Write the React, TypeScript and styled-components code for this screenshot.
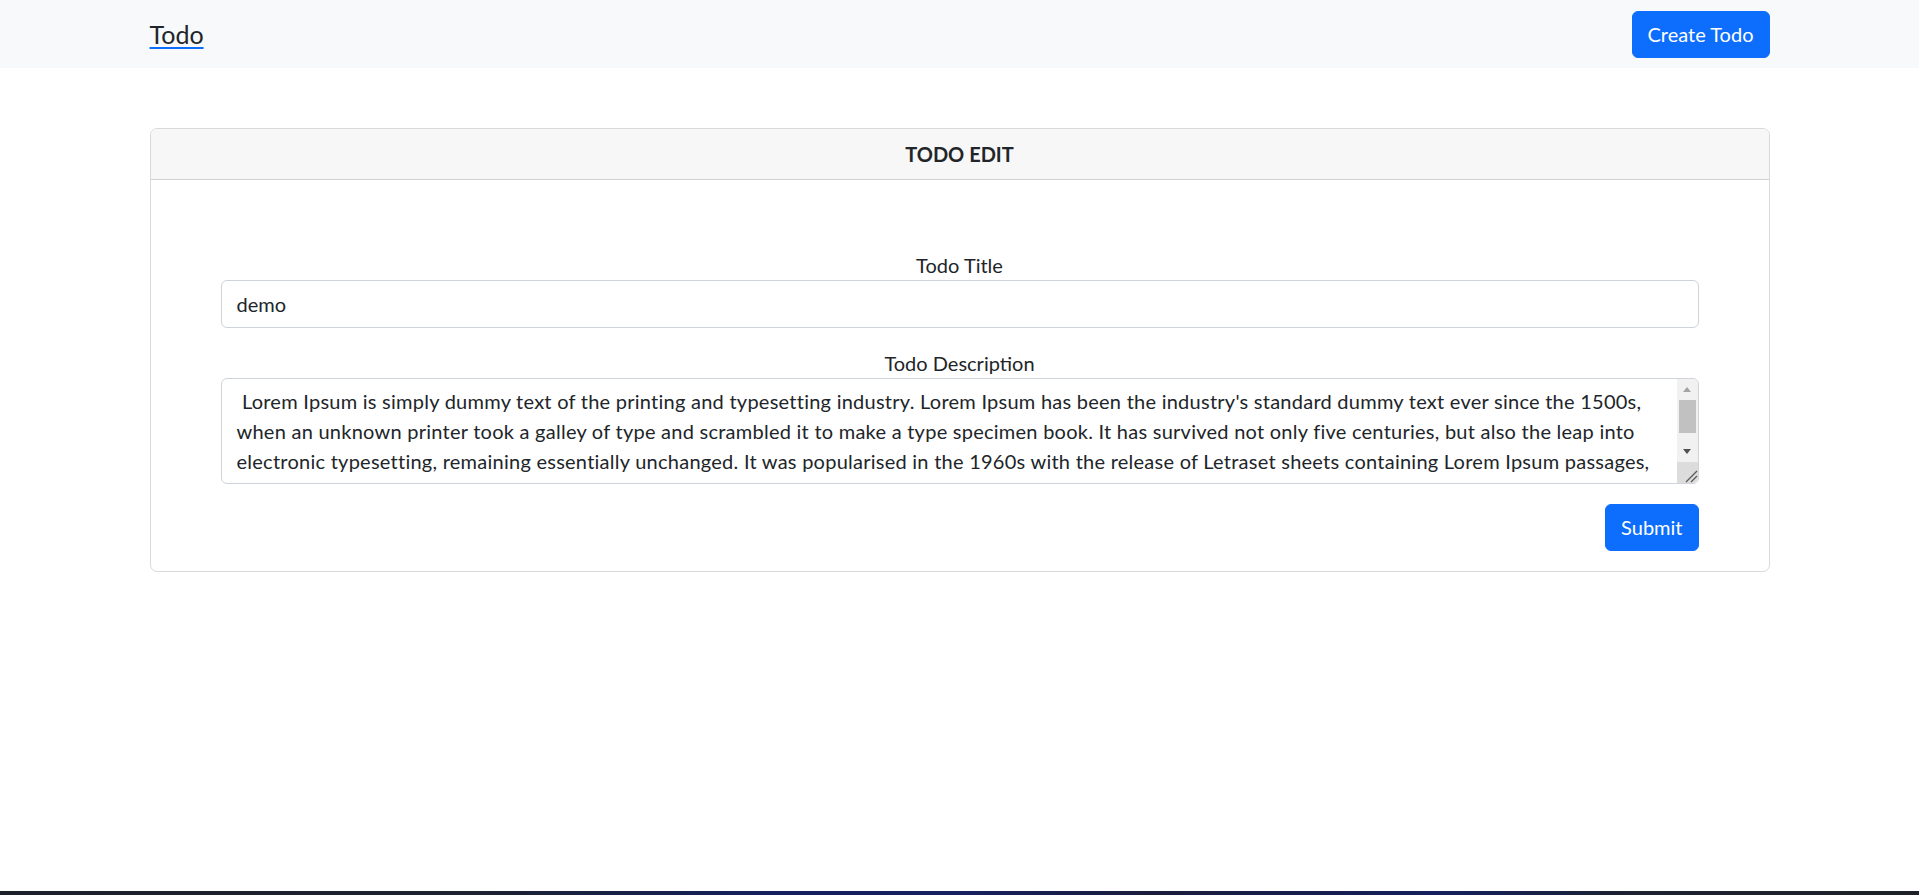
import React from "react";
import styled, { createGlobalStyle } from "styled-components";

const GlobalStyle = createGlobalStyle`
  html, body, #root { height: 100%; }
  body {
    margin: 0;
    font-family: Lato, "Noto Sans", "Liberation Sans", sans-serif;
    font-size: 20px;
    line-height: 30px;
    color: #212529;
    background: #ffffff;
  }
  * { box-sizing: border-box; }
`;

const Page = styled.div`
  min-height: 100%;
  display: flex;
  flex-direction: column;
`;

const Navbar = styled.nav`
  background: #f8f9fa;
  height: 68px;
  display: flex;
  align-items: center;
`;

const Container = styled.div`
  width: 1620px;
  margin: 0 auto;
  display: flex;
  align-items: center;
  justify-content: space-between;
`;

const Brand = styled.a`
  font-size: 25px;
  line-height: 37px;
  color: #212529;
  text-decoration: underline;
  text-decoration-color: #0d6efd;
  text-decoration-thickness: 2px;
  text-underline-offset: 3px;
  cursor: pointer;
`;

const Button = styled.button`
  font-family: inherit;
  font-size: 20px;
  line-height: 30px;
  padding: 7.5px 15px;
  border: 1px solid #0d6efd;
  border-radius: 6px;
  background: #0d6efd;
  color: #ffffff;
  cursor: pointer;
`;

const Main = styled.main`
  flex: 1;
  padding-top: 60px;
`;

const Card = styled.section`
  width: 1620px;
  margin: 0 auto;
  border: 1px solid rgba(0, 0, 0, 0.15);
  border-radius: 7px;
  overflow: hidden;
`;

const CardHeader = styled.header`
  background: #f7f7f7;
  border-bottom: 1px solid rgba(0, 0, 0, 0.15);
  padding: 10px 20px;
  text-align: center;
  font-weight: 700;
  font-size: 20px;
  line-height: 30px;
`;

const CardBody = styled.form`
  padding: 70px 70px 20px;
  display: flex;
  flex-direction: column;
`;

const Field = styled.div<{ $gap?: number }>`
  display: flex;
  flex-direction: column;
  margin-bottom: ${(p) => p.$gap ?? 0}px;
`;

const Label = styled.label`
  text-align: center;
  font-size: 20px;
  line-height: 30px;
`;

const Input = styled.input`
  font-family: inherit;
  font-size: 20px;
  line-height: 30px;
  height: 47.5px;
  padding: 7.5px 15px;
  border: 1px solid #ced4da;
  border-radius: 6px;
  color: #212529;
  outline: none;
`;

const TextAreaBox = styled.div`
  display: flex;
  height: 106px;
  border: 1px solid #ced4da;
  border-radius: 6px;
  overflow: hidden;
`;

const TextArea = styled.textarea`
  flex: 1;
  min-width: 0;
  font-family: inherit;
  font-size: 20px;
  line-height: 30px;
  letter-spacing: 0.25px;
  padding: 7.5px 15px;
  border: none;
  color: #212529;
  background: transparent;
  resize: none;
  outline: none;
  overflow: hidden;
`;

const ScrollBar = styled.div`
  width: 21px;
  display: flex;
  flex-direction: column;
  background: #f1f1f1;
`;

const ArrowButton = styled.div<{ $dir: "up" | "down" }>`
  height: 21px;
  display: flex;
  align-items: center;
  justify-content: center;

  &::before {
    content: "";
    width: 0;
    height: 0;
    border-left: 4.5px solid transparent;
    border-right: 4.5px solid transparent;
    ${(p) =>
      p.$dir === "up"
        ? "border-bottom: 5px solid #a3a3a3;"
        : "border-top: 5px solid #505050;"}
  }
`;

const Track = styled.div`
  flex: 1;
  display: flex;
  flex-direction: column;
  padding: 0 2px;
`;

const Thumb = styled.div`
  height: 33px;
  background: #c1c1c1;
`;

const Resizer = styled.div`
  height: 21px;
  background: #dcdcdc;
  display: flex;
`;

const Actions = styled.div`
  display: flex;
  justify-content: flex-end;
  margin-top: 20px;
`;

const TaskbarEdge = styled.div`
  height: 4px;
  background: linear-gradient(
    90deg,
    #1c2029 0%,
    #1c2230 25%,
    #141f5e 40%,
    #172060 50%,
    #1a1d3a 60%,
    #141f5e 75%,
    #1c2230 85%,
    #1e2128 100%
  );
`;

const description =
  " Lorem Ipsum is simply dummy text of the printing and typesetting industry. Lorem Ipsum has been the industry's standard dummy text ever since the 1500s, when an unknown printer took a galley of type and scrambled it to make a type specimen book. It has survived not only five centuries, but also the leap into electronic typesetting, remaining essentially unchanged. It was popularised in the 1960s with the release of Letraset sheets containing Lorem Ipsum passages, and more recently with desktop publishing software like Aldus PageMaker including versions of Lorem Ipsum.";

export default function App() {
  return (
    <>
      <GlobalStyle />
      <Page>
        <Navbar>
          <Container>
            <Brand>Todo</Brand>
            <Button type="button">Create Todo</Button>
          </Container>
        </Navbar>
        <Main>
          <Card>
            <CardHeader>TODO EDIT</CardHeader>
            <CardBody onSubmit={(e) => e.preventDefault()}>
              <Field $gap={20}>
                <Label htmlFor="title">Todo Title</Label>
                <Input id="title" defaultValue="demo" />
              </Field>
              <Field>
                <Label htmlFor="desc">Todo Description</Label>
                <TextAreaBox>
                  <TextArea id="desc" rows={3} defaultValue={description} />
                  <ScrollBar>
                    <ArrowButton $dir="up" />
                    <Track>
                      <Thumb />
                    </Track>
                    <ArrowButton $dir="down" />
                    <Resizer>
                      <svg width="21" height="21" viewBox="0 0 21 21">
                        <path
                          d="M9 20 L20 9 M14 20 L20 14"
                          stroke="#595959"
                          strokeWidth="1.3"
                          fill="none"
                        />
                      </svg>
                    </Resizer>
                  </ScrollBar>
                </TextAreaBox>
              </Field>
              <Actions>
                <Button type="submit">Submit</Button>
              </Actions>
            </CardBody>
          </Card>
        </Main>
        <TaskbarEdge />
      </Page>
    </>
  );
}
